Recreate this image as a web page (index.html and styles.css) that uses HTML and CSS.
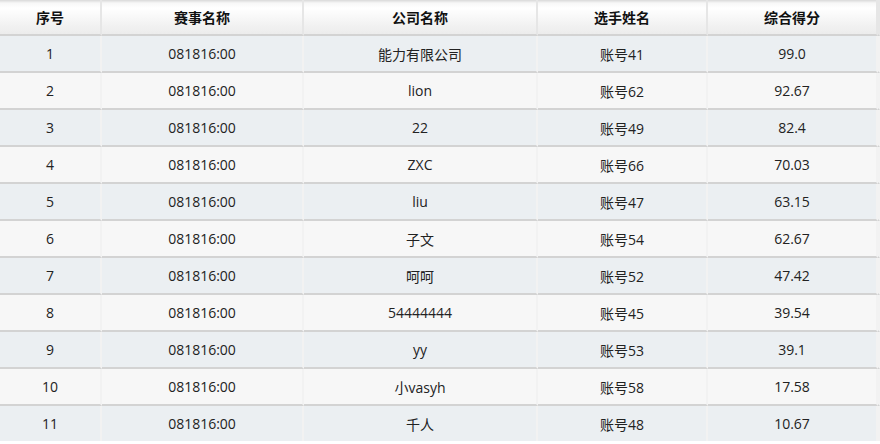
FILE: index.html
```html
<!DOCTYPE html>
<html lang="zh">
<head>
<meta charset="utf-8">
<link rel="stylesheet" href="styles.css">
</head>
<body>
<table class="rank">
  <colgroup>
    <col class="c1"><col class="c2"><col class="c3"><col class="c4"><col class="c5"><col class="c6">
  </colgroup>
  <thead>
    <tr><th>序号</th><th>赛事名称</th><th>公司名称</th><th>选手姓名</th><th>综合得分</th><th></th></tr>
  </thead>
  <tbody>
    <tr><td>1</td><td>081816:00</td><td>能力有限公司</td><td>账号41</td><td>99.0</td><td></td></tr>
    <tr><td>2</td><td>081816:00</td><td>lion</td><td>账号62</td><td>92.67</td><td></td></tr>
    <tr><td>3</td><td>081816:00</td><td>22</td><td>账号49</td><td>82.4</td><td></td></tr>
    <tr><td>4</td><td>081816:00</td><td>ZXC</td><td>账号66</td><td>70.03</td><td></td></tr>
    <tr><td>5</td><td>081816:00</td><td>liu</td><td>账号47</td><td>63.15</td><td></td></tr>
    <tr><td>6</td><td>081816:00</td><td>子文</td><td>账号54</td><td>62.67</td><td></td></tr>
    <tr><td>7</td><td>081816:00</td><td>呵呵</td><td>账号52</td><td>47.42</td><td></td></tr>
    <tr><td>8</td><td>081816:00</td><td>54444444</td><td>账号45</td><td>39.54</td><td></td></tr>
    <tr><td>9</td><td>081816:00</td><td>yy</td><td>账号53</td><td>39.1</td><td></td></tr>
    <tr><td>10</td><td>081816:00</td><td>小vasyh</td><td>账号58</td><td>17.58</td><td></td></tr>
    <tr><td>11</td><td>081816:00</td><td>千人</td><td>账号48</td><td>10.67</td><td></td></tr>
  </tbody>
</table>
</body>
</html>
```
FILE: styles.css
```css
html, body {
  margin: 0;
  padding: 0;
  background: #ffffff;
}
body {
  font-family: "Open Sans", "Noto Sans CJK SC", sans-serif;
  font-size: 14px;
  color: #222222;
  overflow: hidden;
}
.rank {
  border-collapse: separate;
  border-spacing: 0;
  table-layout: fixed;
  width: 880px;
}
.c1 { width: 102px; }
.c2 { width: 202px; }
.c3 { width: 234px; }
.c4 { width: 170px; }
.c5 { width: 170px; }
.c6 { width: 2px; }
.rank th, .rank td {
  padding: 0;
  text-align: center;
  border-right: 2px solid #f2f2f2;
  border-bottom: 2px solid #d3d3d3;
  white-space: nowrap;
  overflow: hidden;
}
.rank th {
  height: 34px;
  font-weight: bold;
  color: #111111;
  background: linear-gradient(to bottom, #d9d9d9 0px, #f7f7f7 3px, #ffffff 8px, #f1f1f1 26px, #ececec 34px);
  border-right-color: #e6e6e6;
}
.rank td {
  height: 35px;
}
.rank tbody tr:nth-child(odd) td {
  background: #ebeff2;
}
.rank tbody tr:nth-child(even) td {
  background: #f7f7f7;
}
.rank tbody tr:last-child td {
  border-bottom: none;
}
```
